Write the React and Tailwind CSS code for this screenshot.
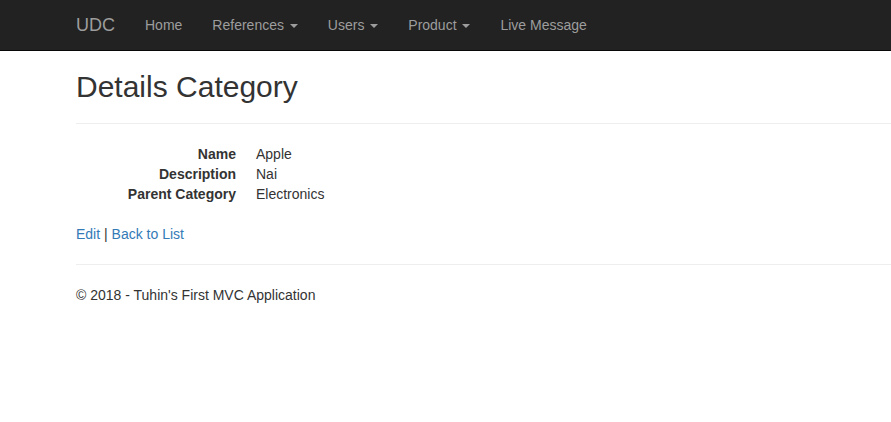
const navLinks = [
  { label: "Home" },
  { label: "References", caret: true },
  { label: "Users", caret: true },
  { label: "Product", caret: true },
  { label: "Live Message" },
];

const details = [
  { term: "Name", value: "Apple" },
  { term: "Description", value: "Nai" },
  { term: "Parent Category", value: "Electronics" },
];

const Caret = () => (
  <span className="inline-block ml-[2px] align-middle w-0 h-0 border-t-[4px] border-t-current border-x-[4px] border-x-transparent" />
);

export default function App() {
  return (
    <div
      className="min-h-screen bg-white text-[#333] text-sm leading-5"
      style={{ fontFamily: '"Liberation Sans", Arial, Helvetica, sans-serif' }}
    >
      {/* Navbar */}
      <nav className="h-[51px] bg-[#222] border-b border-[#080808]">
        <div className="flex items-center h-[50px] pl-[61px]">
          <a className="px-[15px] py-[15px] text-[18px] leading-5 text-[#9d9d9d]">UDC</a>
          <ul className="flex">
            {navLinks.map((link) => (
              <li key={link.label}>
                <a className="block px-[15px] py-[15px] leading-5 text-[#9d9d9d]">
                  {link.label}
                  {link.caret && (
                    <>
                      {" "}
                      <Caret />
                    </>
                  )}
                </a>
              </li>
            ))}
          </ul>
        </div>
      </nav>

      {/* Body */}
      <div className="pl-[76px]">
        <h2 className="mt-[19px] text-[30px] leading-[33px] font-normal">Details Category</h2>
        <hr className="mt-[20px] mb-[20px] border-0 border-t border-[#eee]" />

        <dl className="flex flex-col">
          {details.map((d) => (
            <div key={d.term} className="flex">
              <dt className="w-[160px] text-right font-bold">{d.term}</dt>
              <dd className="ml-[20px]">{d.value}</dd>
            </div>
          ))}
        </dl>

        <p className="mt-[20px]">
          <a className="text-[#337ab7]">Edit</a> |{" "}
          <a className="text-[#337ab7]">Back to List</a>
        </p>

        <hr className="mt-[20px] mb-[20px] border-0 border-t border-[#eee]" />
        <footer>
          <p>© 2018 - Tuhin's First MVC Application</p>
        </footer>
      </div>
    </div>
  );
}
